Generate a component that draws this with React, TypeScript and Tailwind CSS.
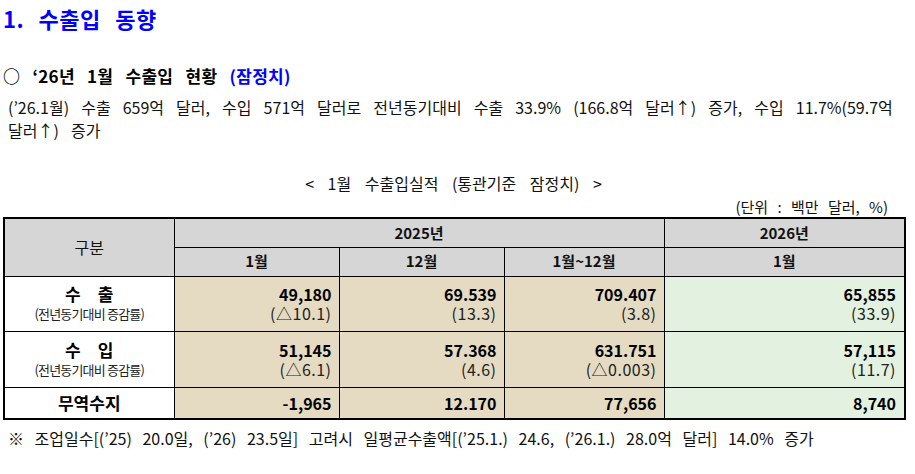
const font = "font-['Malgun_Gothic','Noto_Sans_CJK_KR',sans-serif]";

const rows = [
  {
    label: "수　출",
    sub: "(전년동기대비 증감률)",
    cells: [
      ["49,180", "(△10.1)"],
      ["69.539", "(13.3)"],
      ["709.407", "(3.8)"],
      ["65,855", "(33.9)"],
    ],
  },
  {
    label: "수　입",
    sub: "(전년동기대비 증감률)",
    cells: [
      ["51,145", "(△6.1)"],
      ["57.368", "(4.6)"],
      ["631.751", "(△0.003)"],
      ["57,115", "(11.7)"],
    ],
  },
];

const tan = "bg-[#e4dbc2]";
const green = "bg-[#e2f1e0]";
const cell = "border border-black bg-[#d6d6d6] text-center text-[#111]";
const th = `${cell} text-[15px] font-semibold`;
const td = "border border-black text-right pr-[7px] align-middle";

export default function App() {
  return (
    <div className={`w-[915px] h-[474px] bg-white text-black ${font}`}>
      <div className="px-[3px] pt-[1px]">
        <h1 className="text-[22px] font-bold leading-[34px] text-[#0000ff] tracking-[0.5px] [word-spacing:9px]">
          1. 수출입 동향
        </h1>

        <h2 className="mt-[28px] text-[17px] font-bold leading-[26px] tracking-[0.3px] [word-spacing:8px]">
          ○ ‘26년 1월 수출입 현황 <span className="text-[#0000ff]">(잠정치)</span>
        </h2>

        <p className="mt-[7px] pl-[5px] text-[16px] leading-[23px] text-[#111] [word-spacing:8.5px]">
          (’26.1월) 수출 659억 달러, 수입 571억 달러로 전년동기대비 수출 33.9% (166.8억 달러↑) 증가, 수입 11.7%(59.7억
          <br />
          달러↑) 증가
        </p>

        <div className="mt-[30px] pr-[8px] text-center text-[16px] leading-[22px] text-[#111] [word-spacing:10px]">
          &lt; 1월 수출입실적 (통관기준 잠정치) &gt;
        </div>
        <div className="mt-[4px] pr-[24px] text-right text-[15px] leading-[18px] text-[#111] [word-spacing:6px]">
          (단위 : 백만 달러, %)
        </div>

        <table className="mt-[1px] w-[901px] table-fixed border-collapse border-2 border-black">
          <colgroup>
            <col className="w-[170px]" />
            <col className="w-[165px]" />
            <col className="w-[165px]" />
            <col className="w-[160px]" />
            <col className="w-[241px]" />
          </colgroup>
          <thead>
            <tr className="h-[29px]">
              <th rowSpan={2} className={`${cell} text-[16px] font-normal`}>
                구분
              </th>
              <th colSpan={3} className={th}>
                2025년
              </th>
              <th className={th}>2026년</th>
            </tr>
            <tr className="h-[29px]">
              <th className={th}>1월</th>
              <th className={th}>12월</th>
              <th className={th}>1월~12월</th>
              <th className={th}>1월</th>
            </tr>
          </thead>
          <tbody>
            {rows.map((r, i) => (
              <tr key={r.label} className={i === 0 ? "h-[55px]" : "h-[56px]"}>
                <td className="border border-black text-center align-middle">
                  <div className="text-[17px] font-bold leading-[20px]">{r.label}</div>
                  <div className="text-[13px] leading-[19px] tracking-[-0.8px] text-[#222]">{r.sub}</div>
                </td>
                {r.cells.map((c, j) => (
                  <td key={j} className={`${td} ${j === 3 ? green + " pr-[8px]" : tan}`}>
                    <div className="text-[16px] font-bold leading-[20px]">{c[0]}</div>
                    <div className="text-[16px] leading-[19px] tracking-[0.5px] text-[#222]">{c[1]}</div>
                  </td>
                ))}
              </tr>
            ))}
            <tr className="h-[32px]">
              <td className="border border-black text-center text-[17px] font-bold">무역수지</td>
              <td className={`${td} ${tan} text-[16px] font-bold`}>-1,965</td>
              <td className={`${td} ${tan} text-[16px] font-bold`}>12.170</td>
              <td className={`${td} ${tan} text-[16px] font-bold`}>77,656</td>
              <td className={`${td} ${green} pr-[8px] text-[16px] font-bold`}>8,740</td>
            </tr>
          </tbody>
        </table>

        <p className="mt-[7px] pl-[5px] text-[16px] leading-[23px] text-[#111] [word-spacing:7px]">
          ※ 조업일수[(’25) 20.0일, (’26) 23.5일] 고려시 일평균수출액[(’25.1.) 24.6, (’26.1.) 28.0억 달러] 14.0% 증가
        </p>
      </div>
    </div>
  );
}
